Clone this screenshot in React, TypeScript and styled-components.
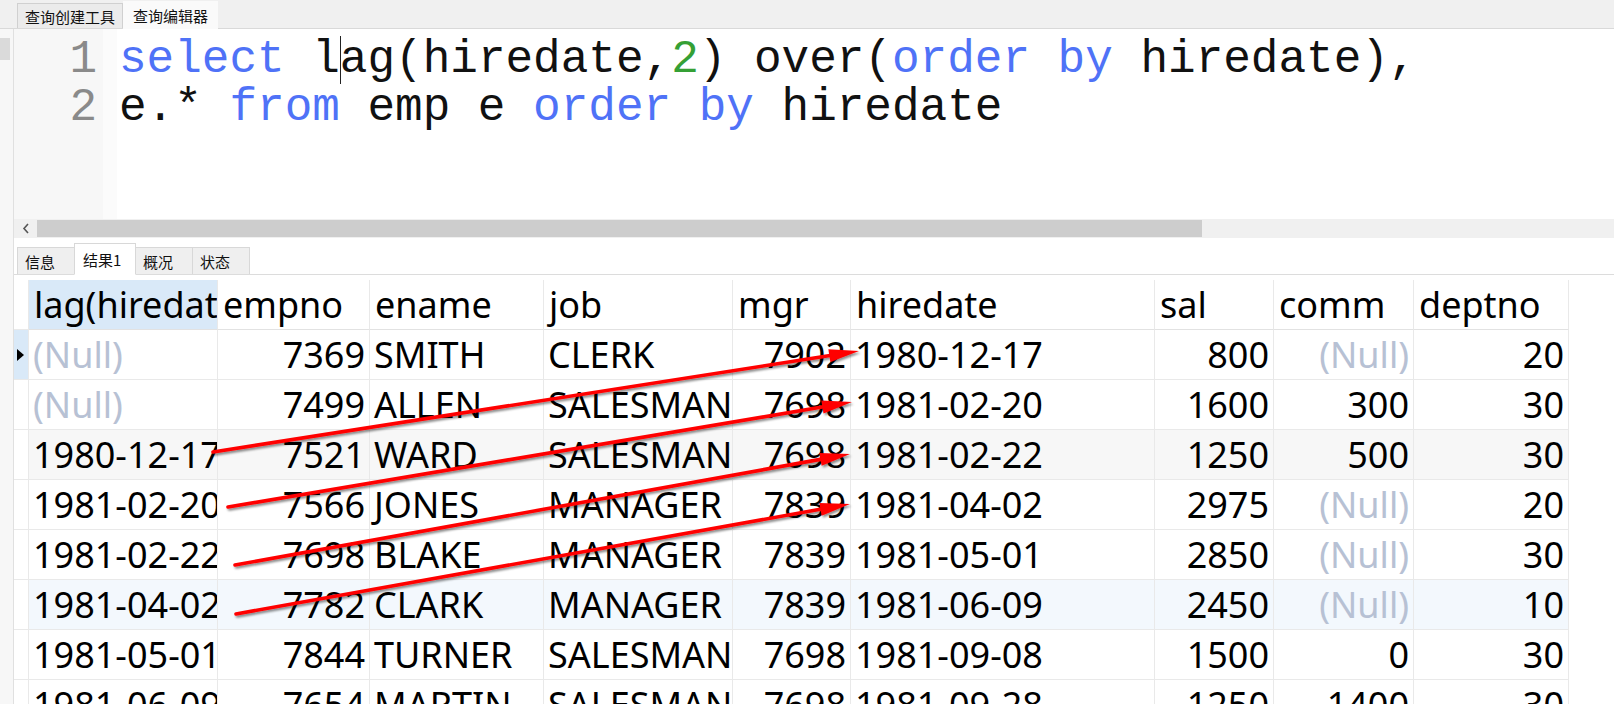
import React from 'react';
import styled, { createGlobalStyle } from 'styled-components';

const GlobalStyle = createGlobalStyle`
  html, body {
    margin: 0;
    padding: 0;
    background: #ffffff;
  }
  body {
    font-family: "Noto Sans", "Noto Sans CJK SC", sans-serif;
  }
`;

type Align = 'left' | 'right';

const columns: { name: string; width: number; align: Align }[] = [
  { name: 'lag(hiredate,2) over(order by hiredate)', width: 189, align: 'left' },
  { name: 'empno', width: 152, align: 'right' },
  { name: 'ename', width: 174, align: 'left' },
  { name: 'job', width: 189, align: 'left' },
  { name: 'mgr', width: 118, align: 'right' },
  { name: 'hiredate', width: 304, align: 'left' },
  { name: 'sal', width: 119, align: 'right' },
  { name: 'comm', width: 140, align: 'right' },
  { name: 'deptno', width: 155, align: 'right' },
];

const rows: { cells: (string | null)[]; tint?: string; current?: boolean }[] = [
  { cells: [null, '7369', 'SMITH', 'CLERK', '7902', '1980-12-17', '800', null, '20'], current: true },
  { cells: [null, '7499', 'ALLEN', 'SALESMAN', '7698', '1981-02-20', '1600', '300', '30'] },
  { cells: ['1980-12-17', '7521', 'WARD', 'SALESMAN', '7698', '1981-02-22', '1250', '500', '30'], tint: '#f7f7f7' },
  { cells: ['1981-02-20', '7566', 'JONES', 'MANAGER', '7839', '1981-04-02', '2975', null, '20'] },
  { cells: ['1981-02-22', '7698', 'BLAKE', 'MANAGER', '7839', '1981-05-01', '2850', null, '30'] },
  { cells: ['1981-04-02', '7782', 'CLARK', 'MANAGER', '7839', '1981-06-09', '2450', null, '10'], tint: '#f3f8fd' },
  { cells: ['1981-05-01', '7844', 'TURNER', 'SALESMAN', '7698', '1981-09-08', '1500', '0', '30'] },
  { cells: ['1981-06-09', '7654', 'MARTIN', 'SALESMAN', '7698', '1981-09-28', '1250', '1400', '30'] },
];

// red annotation arrows, drawn over the grid
const arrows = [
  { x1: 213, y1: 452, x2: 859, y2: 351 },
  { x1: 228, y1: 507, x2: 852, y2: 402 },
  { x1: 235, y1: 565, x2: 850, y2: 454 },
  { x1: 236, y1: 614, x2: 850, y2: 504 },
];

const gridTemplate = `15px ${columns.map((c) => c.width + 'px').join(' ')}`;

const Arrow = ({ x1, y1, x2, y2 }: { x1: number; y1: number; x2: number; y2: number }) => {
  const len = Math.hypot(x2 - x1, y2 - y1);
  const ux = (x2 - x1) / len;
  const uy = (y2 - y1) / len;
  const head = 30;
  const half = 6.5;
  const bx = x2 - ux * head;
  const by = y2 - uy * head;
  const px = -uy * half;
  const py = ux * half;
  return (
    <g filter="url(#arrowShadow)">
      <line x1={x1} y1={y1} x2={bx + ux * 4} y2={by + uy * 4} stroke="#ff0000" strokeWidth={3.6} strokeLinecap="round" />
      <polygon points={`${x2},${y2} ${bx + px},${by + py} ${bx - px},${by - py}`} fill="#ff0000" />
    </g>
  );
};

export default function App() {
  return (
    <Window>
      <GlobalStyle />
      <TopBar>
        <TopTab>查询创建工具</TopTab>
        <TopTab $active>查询编辑器</TopTab>
      </TopBar>
      <Body>
        <LeftStrip>
          <Handle />
        </LeftStrip>
        <Main>
          <Editor>
            <Gutter>
              <div>1</div>
              <div>2</div>
            </Gutter>
            <FoldMargin />
            <Code>
              <CodeLine>
                <Token $kind="kw">select</Token> l<Caret />ag(hiredate,<Token $kind="num">2</Token>) over(
                <Token $kind="kw">order</Token> <Token $kind="kw">by</Token> hiredate),
              </CodeLine>
              <CodeLine>
                e.* <Token $kind="kw">from</Token> emp e <Token $kind="kw">order</Token>{' '}
                <Token $kind="kw">by</Token> hiredate
              </CodeLine>
            </Code>
          </Editor>
          <HScroll>
            <ScrollArrow>
              <svg width="8" height="11" viewBox="0 0 8 11">
                <path d="M6 1 L2 5.5 L6 10" fill="none" stroke="#555" strokeWidth="1.6" />
              </svg>
            </ScrollArrow>
            <ScrollThumb />
          </HScroll>
          <ResultTabs>
            <ResultTab>信息</ResultTab>
            <ResultTab $active>结果1</ResultTab>
            <ResultTab>概况</ResultTab>
            <ResultTab>状态</ResultTab>
          </ResultTabs>
          <Table>
            <Row>
              <RowHead />
              {columns.map((c, i) => (
                <HeadCell key={c.name} $selected={i === 0}>
                  {c.name}
                </HeadCell>
              ))}
            </Row>
            {rows.map((r, ri) => (
              <Row key={ri} $tint={r.tint}>
                <RowHead $current={r.current}>{r.current && <Marker />}</RowHead>
                {r.cells.map((v, ci) => (
                  <Cell key={ci} $align={columns[ci].align} $muted={v === null}>
                    {v === null ? '(Null)' : v}
                  </Cell>
                ))}
              </Row>
            ))}
          </Table>
        </Main>
      </Body>
      <Overlay width="1614" height="704" viewBox="0 0 1614 704">
        <defs>
          <filter id="arrowShadow" x="-10%" y="-50%" width="120%" height="200%">
            <feDropShadow dx="1.5" dy="2" stdDeviation="1.2" floodColor="#000" floodOpacity="0.45" />
          </filter>
        </defs>
        {arrows.map((a, i) => (
          <Arrow key={i} {...a} />
        ))}
      </Overlay>
    </Window>
  );
}

const Window = styled.div`
  position: relative;
  width: 1614px;
  height: 704px;
  overflow: hidden;
  display: flex;
  flex-direction: column;
  background: #ffffff;
`;

const TopBar = styled.div`
  flex: none;
  height: 29px;
  box-sizing: border-box;
  display: flex;
  align-items: flex-end;
  padding-left: 17px;
  background: #f0f0f0;
  border-bottom: 1px solid #d9d9d9;
`;

const TopTab = styled.div<{ $active?: boolean }>`
  box-sizing: border-box;
  height: ${(p) => (p.$active ? '28px' : '25px')};
  margin-bottom: ${(p) => (p.$active ? '-1px' : '0')};
  padding: 0 ${(p) => (p.$active ? '9px' : '7px')};
  display: flex;
  align-items: center;
  font-family: "Noto Sans CJK SC", sans-serif;
  font-size: 15px;
  color: #111;
  background: ${(p) => (p.$active ? '#fafafa' : '#ebebeb')};
  border: 1px solid ${(p) => (p.$active ? 'transparent' : '#d0d0d0')};
  border-bottom: none;
`;

const Body = styled.div`
  flex: 1;
  display: flex;
  min-height: 0;
`;

const LeftStrip = styled.div`
  width: 13px;
  flex: none;
  background: #f7f7f7;
  border-right: 1px solid #e0e0e0;
`;

const Handle = styled.div`
  margin-top: 9px;
  width: 10px;
  height: 22px;
  background: #dadada;
`;

const Main = styled.div`
  flex: 1;
  min-width: 0;
  display: flex;
  flex-direction: column;
  overflow: hidden;
`;

const Editor = styled.div`
  flex: none;
  height: 190px;
  display: flex;
  background: #ffffff;
`;

const Gutter = styled.div`
  width: 89px;
  box-sizing: border-box;
  padding: 7px 6px 0 0;
  background: #f7f7f7;
  text-align: right;
  font-family: "Liberation Mono", monospace;
  font-size: 46px;
  line-height: 48px;
  color: #8a8a8a;
`;

const FoldMargin = styled.div`
  width: 14px;
  background: #fbfbfb;
`;

const Code = styled.div`
  flex: 1;
  padding: 7px 0 0 2px;
  font-family: "Liberation Mono", monospace;
  font-size: 46px;
  line-height: 48px;
  color: #111;
`;

const CodeLine = styled.div`
  white-space: pre;
  height: 48px;
`;

const Token = styled.span<{ $kind: 'kw' | 'num' }>`
  color: ${(p) => (p.$kind === 'kw' ? '#4f72f7' : '#35a035')};
`;

const Caret = styled.span`
  display: inline-block;
  width: 0;
  height: 48px;
  margin-right: -1px;
  border-left: 1px solid #222;
  vertical-align: top;
`;

const HScroll = styled.div`
  flex: none;
  height: 19px;
  display: flex;
  align-items: center;
  background: #f0f0f0;
`;

const ScrollArrow = styled.div`
  width: 23px;
  display: flex;
  justify-content: center;
`;

const ScrollThumb = styled.div`
  width: 1165px;
  height: 17px;
  background: #cdcdcd;
`;

const ResultTabs = styled.div`
  flex: none;
  height: 37px;
  box-sizing: border-box;
  display: flex;
  align-items: flex-end;
  padding-left: 3px;
  border-bottom: 1px solid #dcdcdc;
`;

const ResultTab = styled.div<{ $active?: boolean }>`
  box-sizing: border-box;
  height: ${(p) => (p.$active ? '32px' : '27px')};
  margin-bottom: ${(p) => (p.$active ? '-1px' : '0')};
  padding: 0 ${(p) => (p.$active ? '8px' : '7px')};
  min-width: ${(p) => (p.$active ? '62px' : '58px')};
  display: flex;
  align-items: center;
  font-family: "Noto Sans CJK SC", sans-serif;
  font-size: 15px;
  color: #111;
  background: ${(p) => (p.$active ? '#ffffff' : '#efefef')};
  border: 1px solid #d8d8d8;
  border-bottom: ${(p) => (p.$active ? '1px solid #ffffff' : 'none')};
  & + & {
    margin-left: -1px;
  }
`;

const Table = styled.div`
  flex: none;
  margin-top: 5px;
  width: ${15 + columns.reduce((s, c) => s + c.width, 0)}px;
`;

const Row = styled.div<{ $tint?: string }>`
  display: grid;
  grid-template-columns: ${gridTemplate};
  height: 50px;
  background: ${(p) => p.$tint ?? '#ffffff'};
`;

const CellBase = styled.div`
  box-sizing: border-box;
  height: 50px;
  padding: 0 4px;
  overflow: hidden;
  white-space: nowrap;
  border-right: 1px solid #e9e9e9;
  border-bottom: 1px solid #e9e9e9;
  font-family: "Noto Sans", sans-serif;
  font-size: 36px;
  line-height: 49px;
  color: #000;
`;

const HeadCell = styled(CellBase)<{ $selected?: boolean }>`
  background: ${(p) => (p.$selected ? '#d9e9f8' : '#ffffff')};
  padding-left: 5px;
  border-bottom-color: #e2e2e2;
`;

const Cell = styled(CellBase)<{ $align: Align; $muted: boolean }>`
  text-align: ${(p) => p.$align};
  color: ${(p) => (p.$muted ? '#b7c1d4' : '#000')};
`;

const RowHead = styled.div<{ $current?: boolean }>`
  box-sizing: border-box;
  height: 50px;
  display: flex;
  align-items: center;
  padding-left: 3px;
  background: ${(p) => (p.$current ? '#d9e9f8' : '#ffffff')};
  border-right: 1px solid #e9e9e9;
  border-bottom: 1px solid #e9e9e9;
`;

const Marker = styled.div`
  width: 0;
  height: 0;
  border-top: 6px solid transparent;
  border-bottom: 6px solid transparent;
  border-left: 7px solid #000;
`;

const Overlay = styled.svg`
  position: absolute;
  top: 0;
  left: 0;
  pointer-events: none;
`;
